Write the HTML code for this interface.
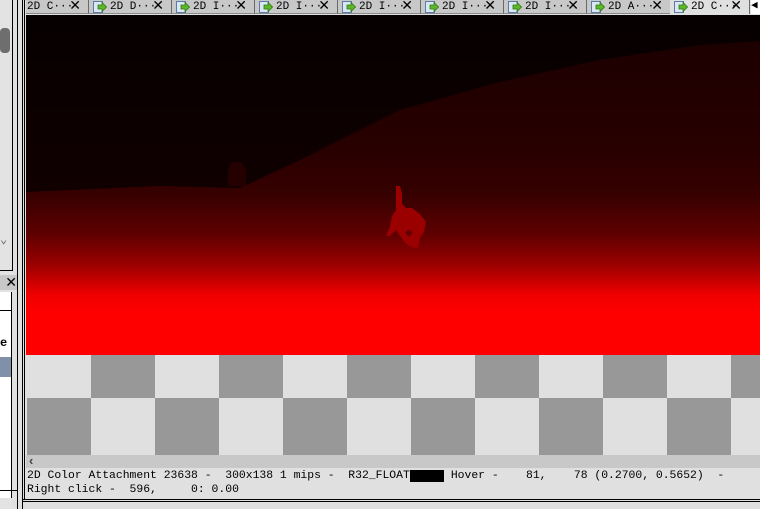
<!DOCTYPE html>
<html><head><meta charset="utf-8"><style>
html,body{margin:0;padding:0;width:760px;height:509px;overflow:hidden;background:#e0e0e0;font-family:"Liberation Mono",monospace;}
.abs{position:absolute}
.tab{position:absolute;top:0;height:14px;background:#c8c8c8;border-right:1px solid #6a6a6a;border-bottom:1px solid #8a8a8a;font-size:11px;line-height:12px;color:#000;box-sizing:border-box}
.tab span{position:absolute;left:21px;top:1px;white-space:nowrap}
.tab b{position:absolute;right:7px;top:-1px;font-weight:normal;font-family:"Liberation Sans",sans-serif;font-size:14px}
.ic{position:absolute;left:4px;top:1px;width:14px;height:12px}
.st{position:absolute;left:27px;font-size:11.4px;white-space:pre;color:#000}
</style></head><body>
<div class="abs" style="left:0;top:0;width:12px;height:509px;background:#e3e3e3"></div>
<div class="abs" style="left:0;top:28px;width:10px;height:25px;background:#6e6e6e;border-radius:4px"></div>
<div class="abs" style="left:12px;top:0;width:1px;height:270px;background:#000"></div>
<div class="abs" style="left:17px;top:0;width:1px;height:509px;background:#000"></div>
<div class="abs" style="left:22px;top:0;width:1px;height:509px;background:#000"></div>
<div class="abs" style="left:0;top:263px;width:13px;height:7px;border-bottom:1px solid #000"></div>
<div class="abs" style="left:0;top:232px;font-size:12px;color:#666">&#8964;</div>
<div class="abs" style="left:0;top:275px;width:17px;height:15px;background:#c8c8c8;font-family:'Liberation Sans';font-size:14px;line-height:15px;text-align:right">✕</div>
<div class="abs" style="left:0;top:292px;width:11px;height:206px;background:#fff;border-right:1px solid #000"></div>
<div class="abs" style="left:0;top:292px;width:11px;height:18px;border-bottom:1px solid #000;background:#fff"></div>
<div class="abs" style="left:0;top:336px;font-size:12px;font-weight:bold">e</div>
<div class="abs" style="left:0;top:357px;width:11px;height:20px;background:#8090a8"></div>
<div class="abs" style="left:0;top:490px;width:17px;height:1px;background:#000"></div>
<div class="abs" style="left:23px;top:0;width:737px;height:509px;background:#e0e0e0"></div>
<div class="abs" style="left:24px;top:0;width:1px;height:500px;background:#000"></div>
<div class="abs" style="left:23px;top:499px;width:737px;height:1px;background:#000"></div>
<div class="abs" style="left:23px;top:501px;width:737px;height:1px;background:#000"></div>
<div class="tab" style="left:26px;width:63px"><span style="left:1px">2D C···</span><b>✕</b></div>
<script>
const xs=[89,172,255,338,421,504,587];
const lb=["2D D···","2D I···","2D I···","2D I···","2D I···","2D I···"];
for(let i=0;i<6;i++){const l=xs[i],w=xs[i+1]-l;
document.write(`<div class="tab" style="left:${l}px;width:${w}px"><svg class="ic" viewBox="0 0 14 12"><rect x="0.5" y="0.5" width="9" height="11" fill="#dbe7f5" stroke="#5a7ca8"/><path d="M5 4h4V1.5l4.5 4.5-4.5 4.5V8H5z" fill="#5ab82a" stroke="#2f7a10" stroke-width="0.8"/></svg><span>${lb[i]}</span><b>✕</b></div>`);}
</script>
<div class="tab" style="left:587px;width:84px"><svg class="ic" viewBox="0 0 14 12"><rect x="0.5" y="0.5" width="9" height="11" fill="#dbe7f5" stroke="#5a7ca8"/><path d="M5 4h4V1.5l4.5 4.5-4.5 4.5V8H5z" fill="#5ab82a" stroke="#2f7a10" stroke-width="0.8"/></svg><span>2D A···</span><b>✕</b></div>
<div class="tab" style="left:670px;width:80px;background:#e0e0e0;border-bottom:none"><svg class="ic" viewBox="0 0 14 12"><rect x="0.5" y="0.5" width="9" height="11" fill="#dbe7f5" stroke="#5a7ca8"/><path d="M5 4h4V1.5l4.5 4.5-4.5 4.5V8H5z" fill="#5ab82a" stroke="#2f7a10" stroke-width="0.8"/></svg><span>2D C···</span><b>✕</b></div>
<div class="abs" style="left:751px;top:0;width:9px;height:14px;background:#fff;font-size:11px;line-height:13px">◀</div>
<svg class="abs" style="left:26px;top:15px" width="734" height="340" viewBox="26 15 734 340">
<defs>
<linearGradient id="g" x1="0" y1="40" x2="0" y2="355" gradientUnits="userSpaceOnUse">
<stop offset="0" stop-color="#1c0000"/>
<stop offset="0.35" stop-color="#280000"/>
<stop offset="0.49" stop-color="#360000"/>
<stop offset="0.62" stop-color="#600000"/>
<stop offset="0.72" stop-color="#a00000"/>
<stop offset="0.81" stop-color="#f00000"/>
<stop offset="0.87" stop-color="#ff0000"/>
<stop offset="1" stop-color="#ff0000"/>
</linearGradient>
<linearGradient id="d" x1="0" y1="15" x2="0" y2="190" gradientUnits="userSpaceOnUse">
<stop offset="0" stop-color="#060000"/><stop offset="1" stop-color="#100000"/></linearGradient>
</defs>
<rect x="26" y="15" width="734" height="340" fill="url(#d)"/>
<polygon points="26,192 160,186 240,188 300,160 400,110 500,82 600,60 700,45 760,41 760,355 26,355" fill="url(#g)"/>
<path d="M228,186 v-16 l4,-8 h10 l4,8 v16z" fill="#240000"/>
<path d="M396,186 h4 l2,8 v10 l4,4 h6 l8,6 l6,8 l-2,10 l-4,6 l-2,10 h-4 l-8,-4 l-6,-8 l-4,-6 l-6,6 l-4,0 l4,-10 l2,-10 l4,-6z" fill="#9a0000"/>
<circle cx="409" cy="233" r="3" fill="#600000"/>
</svg>
<svg class="abs" style="left:27px;top:355px" width="733" height="100">
<rect width="733" height="100" fill="#e0e0e0"/>
<g fill="#989898">
<rect x="64" y="0" width="64" height="43"/><rect x="192" y="0" width="64" height="43"/><rect x="320" y="0" width="64" height="43"/><rect x="448" y="0" width="64" height="43"/><rect x="576" y="0" width="64" height="43"/><rect x="704" y="0" width="64" height="43"/>
<rect x="0" y="43" width="64" height="57"/><rect x="128" y="43" width="64" height="57"/><rect x="256" y="43" width="64" height="57"/><rect x="384" y="43" width="64" height="57"/><rect x="512" y="43" width="64" height="57"/><rect x="640" y="43" width="64" height="57"/>
</g></svg>
<div class="abs" style="left:26px;top:455px;width:734px;height:13px;background:#c8c8c8"></div>
<div class="abs" style="left:29px;top:453px;font-size:13px;font-weight:bold;color:#444;font-family:'Liberation Sans'">&lsaquo;</div>
<div class="st" style="top:470px">2D Color Attachment 23638 -  300x138 1 mips -  R32_FLOAT<span style="background:#000">     </span> Hover -    81,    78 (0.2700, 0.5652)  -</div>
<div class="st" style="top:484px">Right click -  596,     0: 0.00</div>
</body></html>
